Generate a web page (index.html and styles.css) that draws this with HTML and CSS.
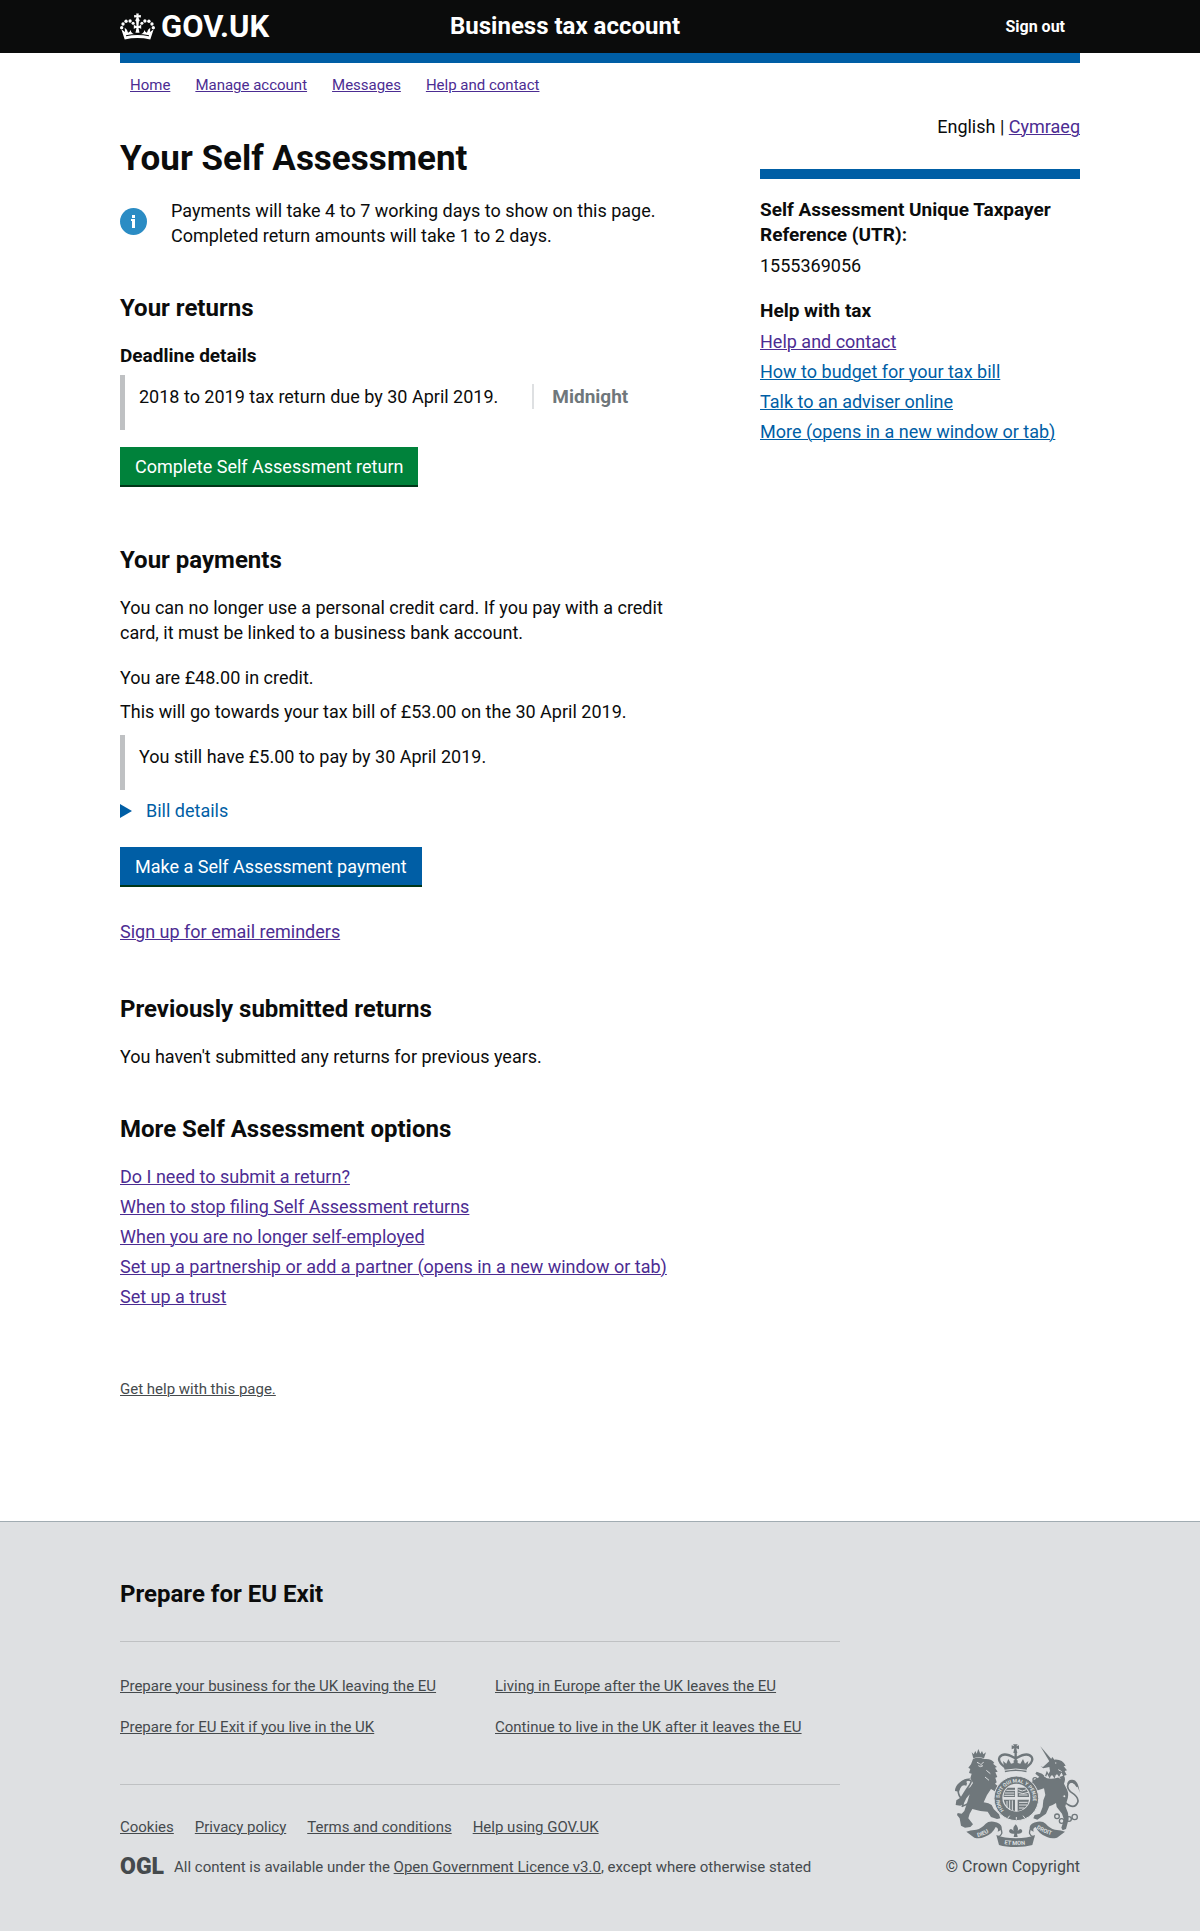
FILE: index.html
```
<!DOCTYPE html>
<html lang="en">
<head>
<meta charset="utf-8">
<meta name="viewport" content="width=device-width, initial-scale=1">
<title>Your Self Assessment - Business tax account - GOV.UK</title>
<link rel="stylesheet" href="styles.css">
</head>
<body>
<header class="site-header">
  <div class="container site-header-inner">
    <a class="logo" href="#">
      <svg class="logo-crown" viewBox="32 36 104 82" aria-hidden="true">
        <g fill="#fff">
          <circle cx="37" cy="79" r="5"/><circle cx="41" cy="68" r="5"/><circle cx="50" cy="60" r="5"/><circle cx="62" cy="59" r="5"/><circle cx="71" cy="66" r="4.500"/>
          <circle cx="131" cy="79" r="5"/><circle cx="127" cy="68" r="5"/><circle cx="118" cy="60" r="5"/><circle cx="106" cy="59" r="5"/><circle cx="97" cy="66" r="4.500"/>
          <circle cx="84" cy="57" r="6"/>
          <path d="M80 37h8l-1 5 7-1v8l-7-1 1 6h-8l1-6-7 1v-8l7 1z"/>
          <path d="M80 62h8l-1 12q5 0 8-5v14q-4-4-8-3l3 14H78l3-14q-4-1-8 3V69q3 5 8 5z"/>
          <path d="M36 84l10 30q38-8 76 0l10-30-11 8 1-13q-8 4-10 15-6-2-7-8-3 14-21 14T63 86q-1 6-7 8-2-11-10-15l1 13z"/>
        </g>
        <path d="M50 103q34-7 68 0" fill="none" stroke="#0b0c0c" stroke-width="3"/>
      </svg>
      <span>GOV.UK</span>
    </a>
    <a class="service-name" href="#">Business tax account</a>
    <a class="sign-out" href="#">Sign out</a>
  </div>
</header>

<div class="container">
  <nav class="account-nav" aria-label="Account">
    <a href="#">Home</a>
    <a href="#">Manage account</a>
    <a href="#">Messages</a>
    <a href="#">Help and contact</a>
  </nav>

  <div class="columns">
    <main class="main">
      <h1>Your Self Assessment</h1>
      <div class="notice">
        <svg class="notice-icon" viewBox="0 0 27 27" aria-hidden="true"><circle cx="13.500" cy="13.500" r="13.500" fill="#2b8cc4"/><path d="M12 7h3v3h-3zM11 11h4v9h-3v-7h-1z" fill="#fff"/></svg>
        <p>Payments will take 4 to 7 working days to show on this page.<br>Completed return amounts will take 1 to 2 days.</p>
      </div>

      <section class="block">
        <h2>Your returns</h2>
        <h3>Deadline details</h3>
        <div class="inset">
          <span class="due">2018 to 2019 tax return due by 30 April 2019.</span>
          <strong class="due-time">Midnight</strong>
        </div>
        <button class="button button-green" type="button">Complete Self Assessment return</button>
      </section>

      <section class="block block-payments">
        <h2>Your payments</h2>
        <p>You can no longer use a personal credit card. If you pay with a credit card, it must be linked to a business bank account.</p>
        <p class="credit">You are £48.00 in credit.</p>
        <p class="toward">This will go towards your tax bill of £53.00 on the 30 April 2019.</p>
        <div class="inset">You still have £5.00 to pay by 30 April 2019.</div>
        <details class="bill">
          <summary>Bill details</summary>
          <p>£53.00 due on 30 April 2019.</p>
        </details>
        <button class="button button-blue" type="button">Make a Self Assessment payment</button>
        <p class="reminders"><a href="#">Sign up for email reminders</a></p>
      </section>

      <section class="block block-previous">
        <h2>Previously submitted returns</h2>
        <p>You haven't submitted any returns for previous years.</p>
      </section>

      <section class="block">
        <h2>More Self Assessment options</h2>
        <ul class="link-list">
          <li><a href="#">Do I need to submit a return?</a></li>
          <li><a href="#">When to stop filing Self Assessment returns</a></li>
          <li><a href="#">When you are no longer self-employed</a></li>
          <li><a href="#">Set up a partnership or add a partner (opens in a new window or tab)</a></li>
          <li><a href="#">Set up a trust</a></li>
        </ul>
      </section>

      <p class="page-help"><a href="#">Get help with this page.</a></p>
    </main>

    <aside class="sidebar">
      <p class="language">English | <a href="#">Cymraeg</a></p>
      <div class="sidebar-panel">
        <h3>Self Assessment Unique Taxpayer Reference (UTR):</h3>
        <p class="utr">1555369056</p>
        <h3>Help with tax</h3>
        <ul class="link-list">
          <li><a href="#">Help and contact</a></li>
          <li><a class="fresh" href="#">How to budget for your tax bill</a></li>
          <li><a class="fresh" href="#">Talk to an adviser online</a></li>
          <li><a class="fresh" href="#">More (opens in a new window or tab)</a></li>
        </ul>
      </div>
    </aside>
  </div>
</div>

<footer class="footer">
  <div class="container footer-inner">
    <div class="footer-main">
      <h2>Prepare for EU Exit</h2>
      <ul class="footer-topics">
        <li><a href="#">Prepare your business for the UK leaving the EU</a></li>
        <li><a href="#">Living in Europe after the UK leaves the EU</a></li>
        <li><a href="#">Prepare for EU Exit if you live in the UK</a></li>
        <li><a href="#">Continue to live in the UK after it leaves the EU</a></li>
      </ul>
      <ul class="footer-links">
        <li><a href="#">Cookies</a></li>
        <li><a href="#">Privacy policy</a></li>
        <li><a href="#">Terms and conditions</a></li>
        <li><a href="#">Help using GOV.UK</a></li>
      </ul>
      <div class="licence">
        <span class="ogl">OGL</span>
        <p>All content is available under the <a href="#">Open Government Licence v3.0</a>, except where otherwise stated</p>
      </div>
    </div>
    <a class="copyright" href="#">
      <svg class="arms" viewBox="75 36 378 312" aria-hidden="true">
        <g fill="none" stroke="#6f777b" stroke-linecap="round" stroke-linejoin="round">
          <path d="M112 176Q132 150 124 148Q104 142 90 166Q82 188 100 206Q104 216 100 226Q112 222 126 212" stroke-width="5"/>
          <path d="M408 214Q436 238 446 214Q452 200 424 182Q410 168 420 156Q432 146 444 166" stroke-width="5"/>
          <path d="M230 110Q204 92 212 78Q224 62 256 80M290 110Q316 92 308 78Q296 62 264 80M260 66V104" stroke-width="7"/>
          <path d="M214 290Q226 312 206 318M306 290Q294 312 314 318" stroke-width="4"/>
        </g>
        <g fill="#6f777b">
          <path d="M78 180q0-14 12-24 14-14 34-14-4 6-12 10 4 4 0 12-8-4-14 2-4 4-8 16z"/>
          <path d="M452 186q-4-22-16-28-12-6-22 2 2-14 14-14 20-2 24 40z"/>
          <path d="M128 64l6 6 5-10 4 8 5-14 6 14 5-8 4 10 8-6-6 18q-16-6-32 0z"/>
          <path d="M132 84q14-8 34 0 22-2 30 12l-4 2 12 10-6 2 8 12-7 2 6 14-6 2 4 14-5 4 16 14 8 20-10 4-12-14-14-8-12 18-10 22q16 2 24 8l6 12 16 16 4 12-10 2-18-6-10-16-22-2-24-6-8 14-4 14 14 18-8 8-16 2-12-6-4-22-8-10 2-6 12 2 8-8 10-30 6-20-10 12-8 16-10 6-14-2 2-14 12-8 14-22 16-10 8-12-8-14 4-14-8-2 4-12-6-4 8-10z"/>
          <path d="M334 46l38 44-8 6z"/>
          <path d="M342 108l22-20 6-10 6 8q24-2 34 18l-6 2 10 12-7 2 6 12-8 2q6 10 0 24l10 20q6 16-2 34l-4 14 8 20 2 18-8 30-10 4-4-8 8-24-6-18-16-20-2-12q-12 8-20 10l-10 22-26 18-12-4 4-10 16-4 8-20 2-20 6-16-4-20-18 6-16-4-6-14 8-12 18-10-12-10 4-6 16 6 14 12 10-20-2-12-18 4-8-6z"/>
          <path d="M252 40h14l-4 6 8-3v12l-8-3 3 14h-12l3-14-8 3V43l8 3z"/>
          <path d="M222 90l10 8 6-14 8 14 8-2v-8h12v8l8 2 8-14 6 14 10-8-6 34q-32-8-64 0z"/>
          <path d="M112 302q10-4 30-6 16-4 28-18 8-8 24-6 22 4 24 16 2 10-12 14 4-10-6-14-10 22-34 30-14 6-30 2z"/>
          <path d="M408 302q-10-4-30-6-16-4-28-18-8-8-24-6-22 4-24 16-2 10 12 14-4-10 6-14 10 22 34 30 14 6 30 2z"/>
          <path d="M202 312q24 10 58 10t58-10l-8 30q-20 6-50 6t-50-6z"/>
          <path d="M260 280q10 10 6 20 10-12 14 0-2 10-16 8l2 10h-12l2-10q-14 2-16-8 4-12 14 0-4-10 6-20z"/>
        </g>
        <circle cx="262" cy="202" r="67" fill="#6f777b" stroke="#dee0e2" stroke-width="3"/>
        <circle cx="262" cy="200" r="42" fill="#dee0e2"/>
        <path d="M236 170h22v28h-34q0-16 12-28zM266 170h22q12 12 12 28h-34zM224 206h34v34q-28-6-34-34zM266 206h34q-4 28-34 34z" fill="#6f777b"/>
        <g fill="none" stroke="#dee0e2" stroke-width="3">
          <path d="M232 178h26M228 186h28M226 193h30M268 176q12 8 24 0M268 184q12 8 30 0M270 192h26M234 210v20M242 208v28M250 208v30M270 214h26M270 222h24M270 231h16"/>
          <path d="M224 118q36-8 72 0"/>
          <path d="M144 94l8 4M164 94l-6 4M148 104q6 6 14 0M156 98v6M172 118l12 10M168 138l12 10M378 96h4M388 116l10 6M382 134l12 8M236 262l6-8M262 266v-8M288 262l-6-8"/>
        </g>
        <g fill="none" stroke="#6f777b" stroke-width="4">
          <path d="M348 132q14 14 52-2" stroke="#dee0e2" stroke-width="10"/>
          <path d="M350 136l4-12 8 14 6-14 8 14 6-16 8 12 6-12"/>
          <circle cx="318" cy="146" r="6"/><circle cx="338" cy="142" r="5"/><circle cx="384" cy="256" r="7"/><circle cx="398" cy="270" r="7"/><circle cx="420" cy="264" r="7"/><circle cx="437" cy="258" r="8"/><circle cx="406" cy="196" r="5" fill="#dee0e2"/>
        </g>
        <defs>
          <path id="garter" d="M225 238A50 50 0 1 1 299 238"/>
          <path id="motto-left" d="M146 318Q176 312 200 286"/>
          <path id="motto-mid" d="M226 339Q260 346 304 338"/>
          <path id="motto-right" d="M322 292Q344 308 384 316"/>
        </defs>
        <g class="motto">
          <text class="motto-garter"><textPath href="#garter">HONI SOIT QUI MAL Y PENSE</textPath></text>
          <text><textPath href="#motto-left">DIEU</textPath></text>
          <text><textPath href="#motto-mid">ET MON</textPath></text>
          <text><textPath href="#motto-right">DROIT</textPath></text>
        </g>
      </svg>
      <span>© Crown Copyright</span>
    </a>
  </div>
</footer>
</body>
</html>
```
FILE: styles.css
```
* {
  box-sizing: border-box;
}

body {
  margin: 0;
  background: #fff;
  color: #0b0c0c;
  font-family: Roboto, "Liberation Sans", sans-serif;
  font-size: 18px;
  line-height: 25px;
}

h1, h2, h3, p, ul {
  margin: 0;
  padding: 0;
}

ul {
  list-style: none;
}

h1 {
  font-size: 35px;
  line-height: 40px;
}

h2 {
  margin-bottom: 20px;
  font-size: 24px;
  line-height: 30px;
}

h3 {
  font-size: 19px;
  line-height: 25px;
}

a {
  color: #4c2c92;
  text-decoration-thickness: 1px;
}

.fresh {
  color: #005ea5;
}

.container {
  max-width: 960px;
  margin: 0 auto;
}

/* Header */
.site-header {
  background: #0b0c0c;
}

.site-header-inner {
  display: flex;
  align-items: center;
  height: 53px;
}

.site-header a {
  color: #fff;
  font-weight: 700;
  text-decoration: none;
}

.site-header .logo {
  display: flex;
  align-items: center;
  gap: 6px;
  width: 330px;
  font-size: 31px;
}

.logo-crown {
  width: 35px;
  height: 28px;
}

.service-name {
  font-size: 24px;
}

.sign-out {
  margin-left: auto;
  padding-right: 15px;
  font-size: 16px;
}

.account-nav {
  display: flex;
  gap: 25px;
  padding: 12px 10px 0;
  border-top: 10px solid #005ea5;
  font-size: 15px;
  line-height: 20px;
}

/* Page columns */
.columns {
  display: grid;
  grid-template-columns: 2fr 1fr;
  padding-top: 19px;
}

.main {
  padding: 25px 60px 0 0;
}

.notice {
  display: flex;
  align-items: flex-start;
  gap: 24px;
  margin-top: 19px;
}

.notice-icon {
  width: 27px;
  height: 27px;
  margin-top: 10px;
}

.block {
  margin-top: 45px;
}

.block-payments {
  margin-top: 58px;
}

.block-previous {
  margin-top: 50px;
}

.inset {
  display: flex;
  margin-top: 7px;
  padding: 9px 0 21px 14px;
  border-left: 5px solid #bfc1c3;
}

.due-time {
  margin-left: 34px;
  padding-left: 18px;
  border-left: 2px solid #dee0e2;
  color: #6f777b;
  font-size: 19px;
}

.button {
  display: block;
  margin-top: 17px;
  padding: 7px 15px 6px;
  border: 0;
  border-bottom: 2px solid #003618;
  color: #fff;
  font: inherit;
}

.button-green {
  background: #00823b;
}

.button-blue {
  margin-top: 24px;
  background: #005ea5;
}

.credit {
  margin-top: 20px;
}

.toward {
  margin: 9px 0 11px;
}

.bill {
  margin-top: 8px;
}

.bill summary {
  display: flex;
  align-items: center;
  gap: 14px;
  color: #005ea5;
  cursor: pointer;
}

.bill summary::before {
  content: "";
  border: solid transparent;
  border-width: 7px 0 7px 12px;
  border-left-color: #005ea5;
}

.reminders {
  margin-top: 32px;
}

.link-list {
  display: grid;
  gap: 5px;
}

.page-help {
  margin-top: 70px;
  font-size: 15px;
  line-height: 20px;
}

.page-help a {
  color: #454a4d;
}

/* Sidebar */
.language {
  text-align: right;
}

.sidebar-panel {
  margin-top: 30px;
  padding-top: 18px;
  border-top: 10px solid #005ea5;
}

.sidebar-panel h3 {
  margin-bottom: 6px;
}

.utr {
  margin-bottom: 20px;
}

/* Footer */
.footer {
  margin-top: 122px;
  padding: 57px 0 54px;
  border-top: 1px solid #a1acb2;
  background: #dee0e2;
  font-size: 15px;
  line-height: 20px;
}

.footer a {
  color: #454a4d;
}

.footer-inner {
  display: flex;
  justify-content: space-between;
  align-items: flex-end;
}

.footer-main {
  width: 75%;
}

.footer h2 {
  margin-bottom: 32px;
}

.footer-topics {
  display: grid;
  grid-template-columns: 375px 1fr;
  gap: 21px 0;
  padding: 34px 0 47px;
  border: solid #bfc1c3;
  border-width: 1px 0;
}

.footer-links {
  display: flex;
  gap: 21px;
  padding: 32px 0 20px;
}

.licence {
  display: flex;
  gap: 10px;
  color: #454a4d;
}

.ogl {
  font-size: 23px;
  font-weight: 900;
}

.footer .copyright {
  display: grid;
  justify-items: end;
  gap: 10px;
  font-size: 16px;
  text-decoration: none;
}

.arms {
  width: 126px;
  height: 104px;
}

.motto {
  fill: #dee0e2;
  font-size: 17px;
  font-weight: 700;
}

.motto-garter {
  font-size: 15px;
}
```
